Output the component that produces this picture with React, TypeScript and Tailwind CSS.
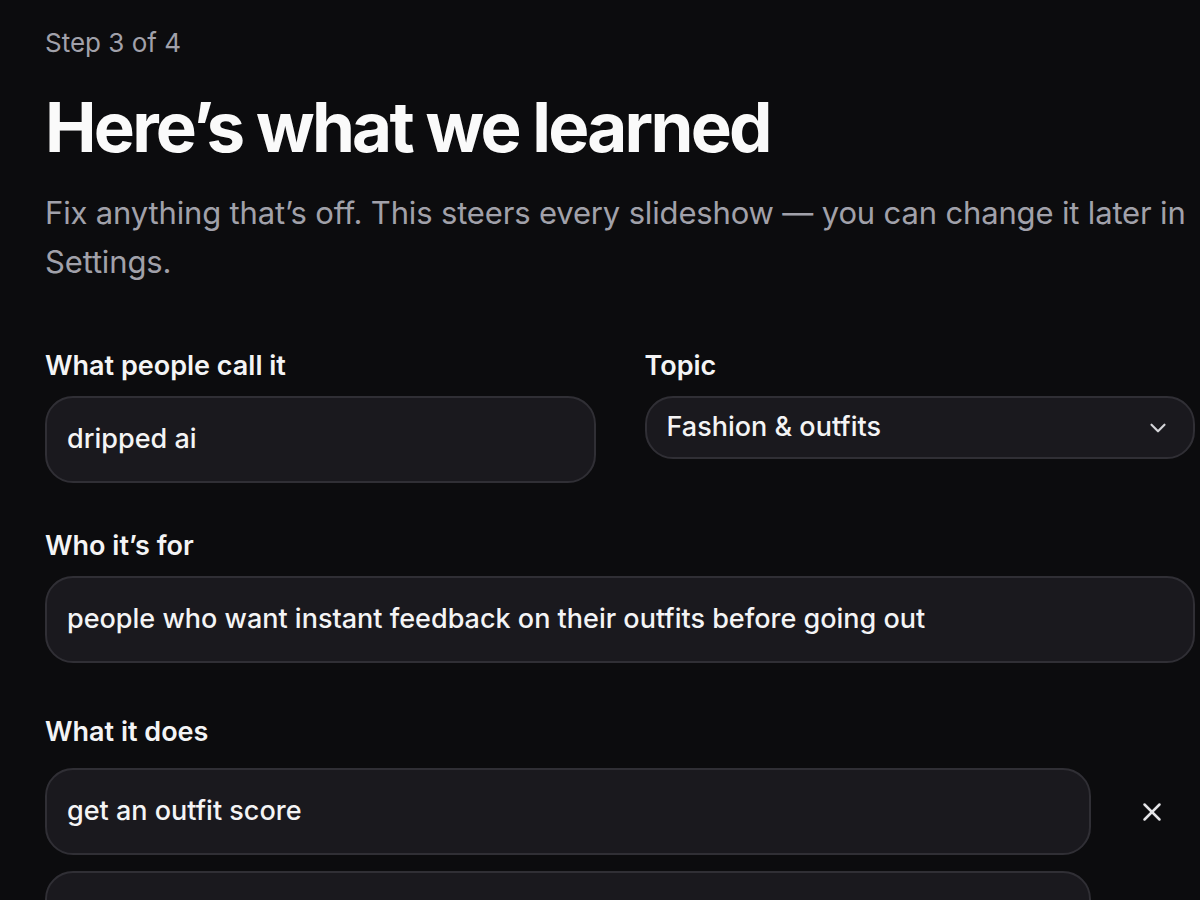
import { ChevronDown, X } from "lucide-react";

const inputBox =
  "w-full rounded-[28px] border-2 border-[#302f35] bg-[#1a191e] px-[20px] text-[27px] font-medium text-[#f4f4f5] outline-none";

function Label({ children }: { children: React.ReactNode }) {
  return (
    <div className="text-[27px] font-semibold leading-[32px] text-[#f4f4f5]">
      {children}
    </div>
  );
}

export default function App() {
  return (
    <div
      className="min-h-screen overflow-hidden bg-[#0c0c0e] pl-[45px]"
      style={{ fontFamily: "Inter, 'Noto Sans', sans-serif" }}
    >
      <div className="w-[1150px] pt-[27px]">
        <div className="text-[26px] leading-[32px] text-[#a1a1aa]">Step 3 of 4</div>

        <h1 className="mt-[30px] text-[69px] font-bold leading-[76px] tracking-[-0.04em] text-[#fafafa]">
          Here’s what we learned
        </h1>

        <p className="mt-[23px] text-[31px] leading-[49px] tracking-[-0.005em] text-[#a1a1aa]">
          Fix anything that’s off. This steers every slideshow — you can change it later in
          Settings.
        </p>

        <div className="mt-[64px] grid grid-cols-2 gap-[49px]">
          <div>
            <Label>What people call it</Label>
            <div className={`${inputBox} mt-[14px] flex h-[87px] items-center`}>dripped ai</div>
          </div>
          <div>
            <Label>Topic</Label>
            <div className={`${inputBox} mt-[14px] flex h-[63px] items-center justify-between pr-[22px]`}>
              <span>Fashion &amp; outfits</span>
              <ChevronDown size={26} strokeWidth={2} className="text-[#d4d4d8]" />
            </div>
          </div>
        </div>

        <div className="mt-[47px]">
          <Label>Who it’s for</Label>
          <div className={`${inputBox} mt-[14px] flex h-[87px] items-center`}>
            people who want instant feedback on their outfits before going out
          </div>
        </div>

        <div className="mt-[53px]">
          <Label>What it does</Label>
          <div className="mt-[20px] flex flex-col gap-[16px]">
            <div className="flex items-center gap-[18px]">
              <div className={`${inputBox} flex h-[87px] flex-1 items-center`}>
                get an outfit score
              </div>
              <button className="flex h-[48px] w-[86px] items-center justify-center text-[#e4e4e7]">
                <X size={30} strokeWidth={2} />
              </button>
            </div>
            <div className="flex items-center gap-[18px]">
              <div className={`${inputBox} flex h-[87px] flex-1 items-center`} />
              <button className="flex h-[48px] w-[86px] items-center justify-center text-[#e4e4e7]">
                <X size={30} strokeWidth={2} />
              </button>
            </div>
          </div>
        </div>
      </div>
    </div>
  );
}
